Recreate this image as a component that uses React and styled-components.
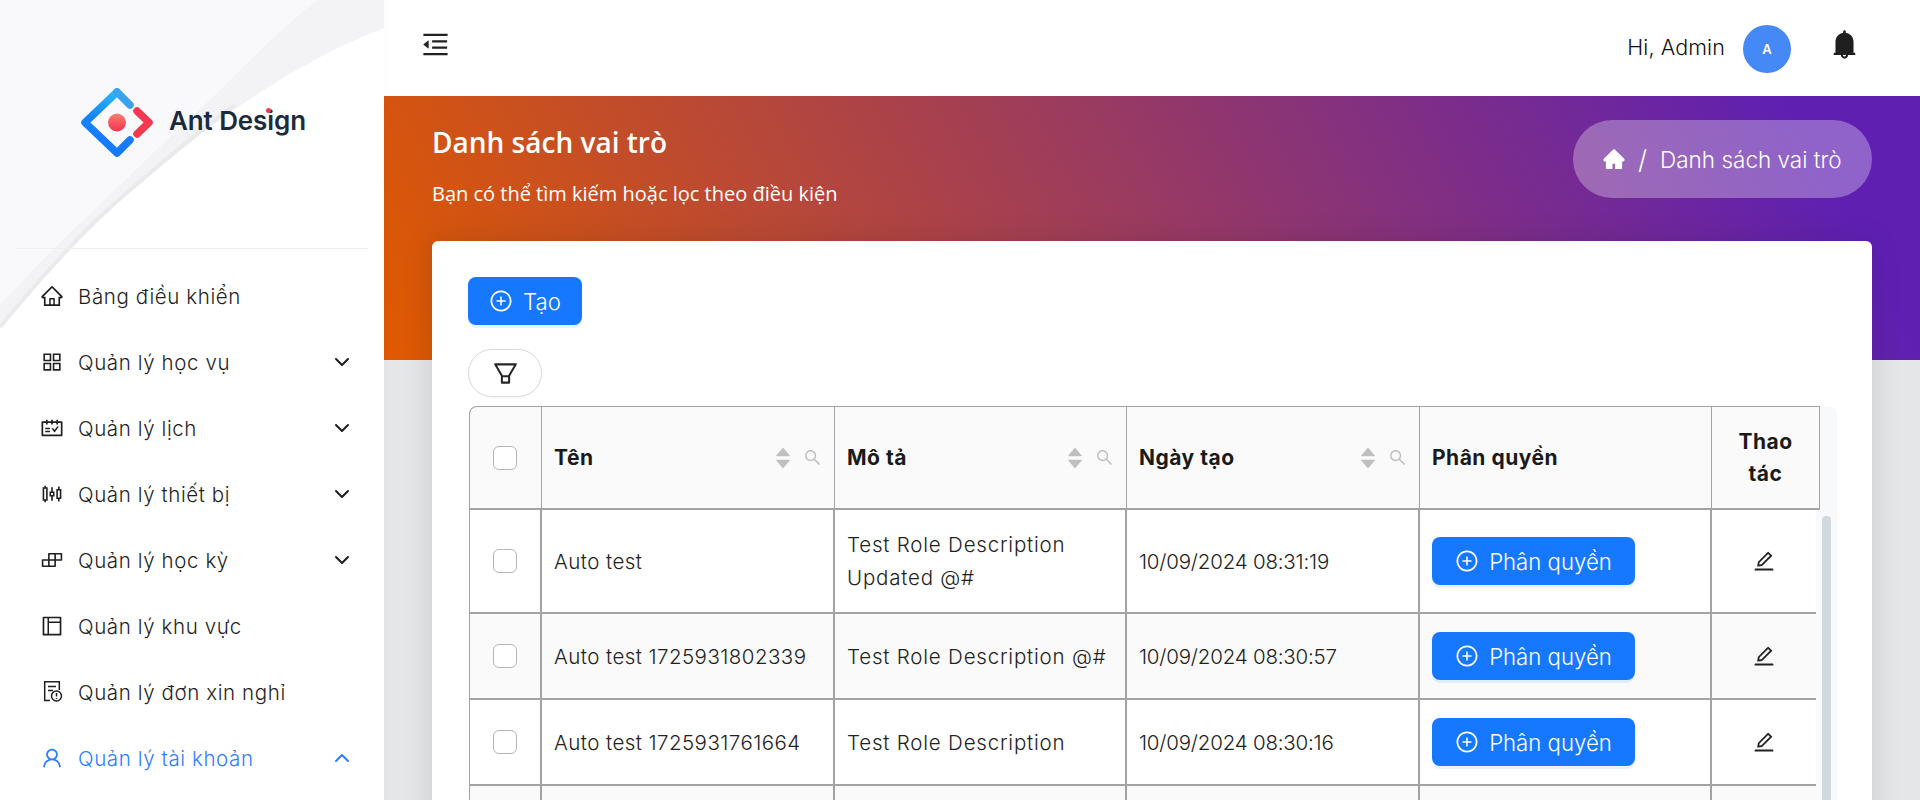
import React from 'react'
import styled, { createGlobalStyle } from 'styled-components'
import {
  AiOutlineHome,
  AiOutlineAppstore,
  AiOutlineSchedule,
  AiOutlineSliders,
  AiOutlineBuild,
  AiOutlineLayout,
  AiOutlineUser,
  AiOutlineMenuFold,
  AiFillBell,
  AiFillHome,
  AiOutlinePlusCircle,
  AiOutlineFilter,
  AiOutlineSearch,
  AiOutlineEdit,
  AiFillCaretUp,
  AiFillCaretDown,
} from 'react-icons/ai'
import { ChevronDown, ChevronUp } from 'lucide-react'

const GlobalStyle = createGlobalStyle`
  html, body {
    margin: 0;
    height: 100%;
    overflow: hidden;
  }
  * {
    box-sizing: border-box;
  }
  body {
    font-family: Inter, "Noto Sans", sans-serif;
    color: #262626;
  }
`

const Page = styled.div`
  display: flex;
  width: 1920px;
  height: 800px;
  overflow: hidden;
  background: #e5e6e8;
`

const Sidebar = styled.aside`
  position: relative;
  z-index: 1;
  flex: 0 0 384px;
  height: 800px;
  background: #fff;
  overflow: hidden;
  box-shadow: 0 0 10px rgba(0, 0, 0, 0.03);
`

const Waves = styled.svg`
  position: absolute;
  top: 0;
  left: 0;
`

const LogoArea = styled.div`
  position: relative;
  height: 249px;
  margin: 0 16px;
  padding: 88px 0 0 65px;
  border-bottom: 1px solid #eeeff1;
  display: flex;
  align-items: flex-start;
  gap: 16px;
`

const LogoText = styled.div`
  position: relative;
  margin-top: 16px;
  font-size: 26px;
  line-height: 34px;
  font-weight: 600;
  letter-spacing: -0.1px;
  color: #1c2b3c;
`

const LogoDot = styled.span`
  position: absolute;
  left: 97px;
  top: 4px;
  width: 5px;
  height: 5px;
  border-radius: 50%;
  background: #f0394f;
`

const Menu = styled.nav`
  position: relative;
  padding-top: 14px;
`

const MenuItem = styled.div`
  display: flex;
  align-items: center;
  height: 66px;
  padding: 0 30px 0 40px;
  color: ${({ $active }) => ($active ? '#2f7dff' : '#1f1f1f')};
  font-size: 20.5px;
  font-weight: 300;
  letter-spacing: 0.6px;
`

const MenuLabel = styled.span`
  flex: 1;
  margin-left: 14px;
`

const Main = styled.main`
  position: relative;
  flex: 1;
  min-width: 0;
`

const Header = styled.header`
  height: 96px;
  background: #fff;
  display: flex;
  align-items: center;
  padding: 0 59px 0 36px;
`

const MenuToggle = styled.div`
  flex: 1;
  display: flex;
  margin-top: -7px;
  color: #222;
`

const Greeting = styled.span`
  font-size: 21.5px;
  font-weight: 300;
  letter-spacing: 0.1px;
  color: #111;
  margin-top: -3px;
`

const Avatar = styled.div`
  width: 48px;
  height: 48px;
  margin: 1px 37px 0 18px;
  border-radius: 50%;
  background: #4589f7;
  color: #fff;
  display: flex;
  align-items: center;
  justify-content: center;
  font-size: 13px;
  font-weight: 600;
`

const BellWrap = styled.div`
  display: flex;
  margin-top: -7px;
  color: #1f1f1f;
`

const Banner = styled.section`
  height: 264px;
  padding: 24px 48px 0;
  background: linear-gradient(62deg, #e05a00 0%, #5f20b2 92%);
  display: flex;
  justify-content: space-between;
  align-items: flex-start;
`

const BannerTitle = styled.h1`
  margin: 4px 0 0;
  font-family: "Open Sans", sans-serif;
  font-size: 28px;
  line-height: 36px;
  font-weight: 600;
  color: #fff;
`

const BannerSub = styled.p`
  margin: 21px 0 0;
  font-family: "Open Sans", sans-serif;
  font-size: 20px;
  line-height: 26px;
  color: #fff;
`

const Crumbs = styled.div`
  display: flex;
  align-items: center;
  width: 299px;
  height: 78px;
  padding-left: 29px;
  border-radius: 39px;
  background: rgba(255, 255, 255, 0.3);
  color: #fff;
  font-size: 22.5px;
  font-weight: 300;
`

const CrumbSlash = styled.span`
  margin: 0 13px 0 12px;
  font-size: 26px;
`

const Card = styled.section`
  position: absolute;
  left: 48px;
  top: 241px;
  width: 1440px;
  height: 700px;
  padding: 36px 36px 0;
  border-radius: 6px;
  background: #fff;
  box-shadow: 0 0 30px rgba(0, 0, 0, 0.12);
`

const PrimaryButton = styled.button`
  display: inline-flex;
  align-items: center;
  justify-content: center;
  gap: 10px;
  width: ${({ $width }) => $width}px;
  height: 48px;
  padding: 0;
  border: none;
  border-radius: 8px;
  background: #1677ff;
  color: #fff;
  font-family: inherit;
  font-size: 22.2px;
  font-weight: 300;
  box-shadow: 0 3px 0 rgba(5, 145, 255, 0.1);
`

const FilterButton = styled.button`
  display: flex;
  align-items: center;
  justify-content: center;
  width: 74px;
  height: 48px;
  margin-top: 24px;
  padding: 0;
  border: 1px solid #d9d9d9;
  border-radius: 24px;
  background: #fff;
  color: #262626;
  box-shadow: 0 2px 0 rgba(0, 0, 0, 0.02);
`

const TableBox = styled.div`
  position: relative;
  width: 1368px;
  margin: 9px 0 0 1px;
  border-radius: 8px 8px 0 0;
  background: #f8f9fa;
`

const HeadRow = styled.div`
  display: grid;
  grid-template-columns: 72px 293px 292px 293px 292px 1fr;
  width: 1351px;
  height: 104px;
  border-top: 1px solid #a3a3a3;
  border-right: 1px solid #a3a3a3;
  border-left: 1px solid #a3a3a3;
  border-bottom: 2px solid #a3a3a3;
  border-radius: 8px 0 0 0;
  background: #fafafa;
`

const HeadCell = styled.div`
  display: flex;
  align-items: center;
  justify-content: ${({ $center }) => ($center ? 'center' : 'flex-start')};
  padding: 0 12px;
  border-right: ${({ $last }) => ($last ? 'none' : '1px solid #a3a3a3')};
  font-size: 21px;
  line-height: 32px;
  font-weight: 700;
  letter-spacing: 0.5px;
  color: #1a1a1a;
  text-align: ${({ $center }) => ($center ? 'center' : 'left')};
`

const HeadLabel = styled.span`
  flex: ${({ $center }) => ($center ? '0 1 auto' : '1')};
  max-width: ${({ $center }) => ($center ? '70px' : 'none')};
`

const SortIcons = styled.span`
  display: flex;
  flex-direction: column;
  margin-right: 10px;
  color: #bfbfbf;
  svg {
    margin: -4px 0;
  }
`

const SearchIcon = styled.span`
  display: flex;
  color: #bfbfbf;
`

const BodyRows = styled.div`
  width: 1347px;
  border-left: 1px solid #a3a3a3;
  background: #fff;
`

const Row = styled.div`
  display: grid;
  grid-template-columns: 72px 293px 292px 293px 292px 1fr;
  height: ${({ $height }) => $height}px;
  border-bottom: 2px solid #a3a3a3;
  background: ${({ $striped }) => ($striped ? '#fafafa' : '#fff')};
`

const Cell = styled.div`
  display: flex;
  align-items: center;
  justify-content: ${({ $center }) => ($center ? 'center' : 'flex-start')};
  padding: 0 12px;
  border-right: ${({ $last }) => ($last ? 'none' : '2px solid #a3a3a3')};
  font-size: 20.5px;
  font-weight: 300;
  line-height: 33px;
  letter-spacing: ${({ $track }) => $track ?? 0.45}px;
  color: #222;
`

const Checkbox = styled.span`
  display: block;
  width: 24px;
  height: 24px;
  margin-left: -1px;
  border: 1px solid #b5b5b5;
  border-radius: 6px;
  background: #fff;
`

const Scrollbar = styled.div`
  position: absolute;
  top: 110px;
  right: 6px;
  width: 9px;
  height: 600px;
  border-radius: 4px;
  background: #d1d9dd;
`

const EditIcon = styled.span`
  display: flex;
  color: #222;
`

// the leave request icon: a page with a small alert clock in its corner
const LeaveIcon = ({ size }) => (
  <svg width={size} height={size} viewBox="0 0 24 24" fill="none" stroke="currentColor" strokeWidth="1.5">
    <path d="M10 20.5 H4.7 V1.7 H19.3 V10" />
    <path d="M8 6.5 H16 M8 10.5 H13" />
    <circle cx="16.5" cy="16" r="5" />
    <path d="M16.5 13 V16.5 M16.5 18 V19" />
  </svg>
)

const menu = [
  { label: 'Bảng điều khiển', Icon: AiOutlineHome },
  { label: 'Quản lý học vụ', Icon: AiOutlineAppstore, arrow: true },
  { label: 'Quản lý lịch', Icon: AiOutlineSchedule, arrow: true },
  { label: 'Quản lý thiết bị', Icon: AiOutlineSliders, arrow: true },
  { label: 'Quản lý học kỳ', Icon: AiOutlineBuild, arrow: true },
  { label: 'Quản lý khu vực', Icon: AiOutlineLayout },
  { label: 'Quản lý đơn xin nghỉ', Icon: LeaveIcon },
  { label: 'Quản lý tài khoản', Icon: AiOutlineUser, arrow: true, active: true },
]

const rows = [
  { name: 'Auto test', desc: ['Test Role Description', 'Updated @#'], date: '10/09/2024 08:31:19', height: 104 },
  { name: 'Auto test 1725931802339', desc: ['Test Role Description @#'], date: '10/09/2024 08:30:57', height: 86, striped: true },
  { name: 'Auto test 1725931761664', desc: ['Test Role Description'], date: '10/09/2024 08:30:16', height: 86 },
]

const Logo = () => (
  <svg width="72" height="70" viewBox="0 0 72 70">
    <defs>
      <linearGradient id="logoBlue" x1="0.6" y1="0" x2="0.4" y2="1">
        <stop offset="0" stopColor="#29b6fb" />
        <stop offset="0.5" stopColor="#1583fb" />
        <stop offset="1" stopColor="#1677ff" />
      </linearGradient>
      <linearGradient id="logoRed" x1="0" y1="0" x2="0" y2="1">
        <stop offset="0" stopColor="#fa816e" />
        <stop offset="1" stopColor="#f5304f" />
      </linearGradient>
    </defs>
    <path d="M36 4 L4 34.5 L36 65 L49 52" fill="none" stroke="url(#logoBlue)" strokeWidth="7.5" strokeLinecap="round" strokeLinejoin="round" />
    <path d="M36 4 L49 17" fill="none" stroke="#3ba3ee" strokeWidth="7.5" strokeLinecap="round" />
    <path d="M56 23 L68 34.5 L56 46" fill="none" stroke="#f2394f" strokeWidth="7.5" strokeLinecap="round" strokeLinejoin="round" />
    <circle cx="36" cy="34.5" r="9" fill="url(#logoRed)" />
  </svg>
)

const SideWaves = () => (
  <Waves width="384" height="340" viewBox="0 0 384 340">
    <path d="M0 0 H384 V28 C300 60 220 115 130 190 C80 232 35 285 0 327 Z" fill="#f9f9fc" />
    <path d="M317 0 H384 V28 C300 60 220 115 130 190 C80 232 35 285 0 327 V305 C50 250 130 175 220 90 C250 60 285 25 317 0 Z" fill="#f3f3f5" />
    <path d="M235 105 C200 130 165 160 130 190 C80 232 35 285 0 327" fill="none" stroke="#eaeaec" strokeWidth="4" />
  </Waves>
)

const App = () => {
  return (
    <Page>
      <GlobalStyle />
      <Sidebar>
        <SideWaves />
        <LogoArea>
          <Logo />
          <LogoText>
            Ant Design
            <LogoDot />
          </LogoText>
        </LogoArea>
        <Menu>
          {menu.map(({ label, Icon, arrow, active }) => (
            <MenuItem key={label} $active={active}>
              <Icon size={24} />
              <MenuLabel>{label}</MenuLabel>
              {arrow && (active ? <ChevronUp size={24} strokeWidth={2} /> : <ChevronDown size={24} strokeWidth={2} />)}
            </MenuItem>
          ))}
        </Menu>
      </Sidebar>
      <Main>
        <Header>
          <MenuToggle>
            <AiOutlineMenuFold size={31} />
          </MenuToggle>
          <Greeting>Hi, Admin</Greeting>
          <Avatar>A</Avatar>
          <BellWrap>
            <AiFillBell size={33} />
          </BellWrap>
        </Header>
        <Banner>
          <div>
            <BannerTitle>Danh sách vai trò</BannerTitle>
            <BannerSub>Bạn có thể tìm kiếm hoặc lọc theo điều kiện</BannerSub>
          </div>
          <Crumbs>
            <AiFillHome size={24} />
            <CrumbSlash>/</CrumbSlash>
            <span>Danh sách vai trò</span>
          </Crumbs>
        </Banner>
        <Card>
          <PrimaryButton $width={114}>
            <AiOutlinePlusCircle size={24} />
            Tạo
          </PrimaryButton>
          <FilterButton>
            <AiOutlineFilter size={29} />
          </FilterButton>
          <TableBox>
            <HeadRow>
              <HeadCell $center>
                <Checkbox />
              </HeadCell>
              {['Tên', 'Mô tả', 'Ngày tạo'].map((title) => (
                <HeadCell key={title}>
                  <HeadLabel>{title}</HeadLabel>
                  <SortIcons>
                    <AiFillCaretUp size={20} />
                    <AiFillCaretDown size={20} />
                  </SortIcons>
                  <SearchIcon>
                    <AiOutlineSearch size={19} />
                  </SearchIcon>
                </HeadCell>
              ))}
              <HeadCell>
                <HeadLabel>Phân quyền</HeadLabel>
              </HeadCell>
              <HeadCell $center $last>
                <HeadLabel $center>Thao tác</HeadLabel>
              </HeadCell>
            </HeadRow>
            <BodyRows>
              {rows.map((row) => (
                <Row key={row.name} $height={row.height} $striped={row.striped}>
                  <Cell $center>
                    <Checkbox />
                  </Cell>
                  <Cell>{row.name}</Cell>
                  <Cell $track={0.8}>
                    <div>
                      {row.desc.map((line) => (
                        <div key={line}>{line}</div>
                      ))}
                    </div>
                  </Cell>
                  <Cell $track={-0.2}>{row.date}</Cell>
                  <Cell>
                    <PrimaryButton $width={203}>
                      <AiOutlinePlusCircle size={24} />
                      Phân quyền
                    </PrimaryButton>
                  </Cell>
                  <Cell $center $last>
                    <EditIcon>
                      <AiOutlineEdit size={24} />
                    </EditIcon>
                  </Cell>
                </Row>
              ))}
              <Row $height={86} $striped>
                <Cell />
                <Cell />
                <Cell />
                <Cell />
                <Cell />
                <Cell $last />
              </Row>
            </BodyRows>
            <Scrollbar />
          </TableBox>
        </Card>
      </Main>
    </Page>
  )
}

export default App
